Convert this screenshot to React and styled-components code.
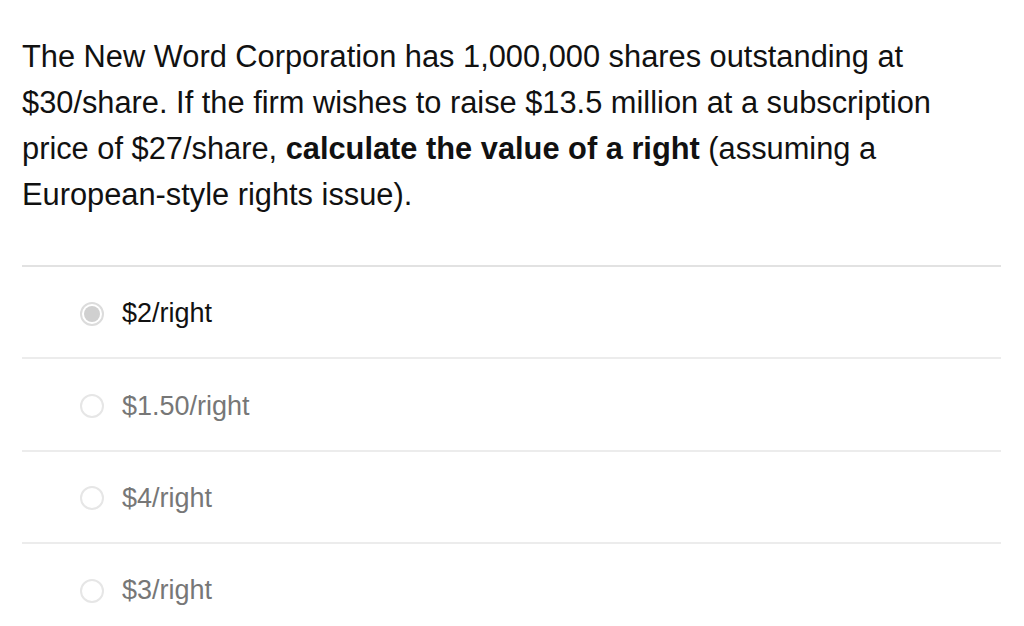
import React from "react";
import styled, { createGlobalStyle } from "styled-components";

const Global = createGlobalStyle`
  html, body { margin: 0; padding: 0; background: #fff; }
  body { font-family: "Liberation Sans", Arial, sans-serif; }
`;

const Page = styled.div`
  padding: 34px 23px 0 22px;
  width: 1024px;
  box-sizing: border-box;
`;

const Question = styled.p`
  margin: 0 0 47px 0;
  font-size: 30.8px;
  line-height: 46px;
  color: #111;
`;

const Options = styled.div`
  display: flex;
  flex-direction: column;
`;

const Row = styled.label`
  display: flex;
  align-items: center;
  box-sizing: border-box;
  height: 92.4px;
  padding-top: 3px;
  border-top: 2px solid ${(p) => (p.$first ? "#e2e2e2" : "#ececec")};
  padding-left: 58px;
  gap: 18px;
`;

const Radio = styled.span`
  width: 24px;
  height: 24px;
  box-sizing: border-box;
  border-radius: 50%;
  border: 2px solid ${(p) => (p.$checked ? "#dcdcdc" : "#e6e6e6")};
  background: #fff;
  display: flex;
  align-items: center;
  justify-content: center;
  &::after {
    content: "";
    width: 16px;
    height: 16px;
    border-radius: 50%;
    background: ${(p) => (p.$checked ? "#d0d0d0" : "transparent")};
  }
`;

const Label = styled.span`
  font-size: 27px;
  color: ${(p) => (p.$checked ? "#111" : "#777")};
`;

const options = ["$2/right", "$1.50/right", "$4/right", "$3/right"];

export default function App() {
  return (
    <Page>
      <Global />
      <Question>
        The New Word Corporation has 1,000,000 shares outstanding at $30/share. If the firm wishes to raise $13.5 million at a subscription price of $27/share, <b>calculate the value of a right</b> (assuming a European-style rights issue).
      </Question>
      <Options>
        {options.map((o, i) => (
          <Row key={o} $first={i === 0}>
            <Radio $checked={i === 0} />
            <Label $checked={i === 0}>{o}</Label>
          </Row>
        ))}
      </Options>
    </Page>
  );
}
